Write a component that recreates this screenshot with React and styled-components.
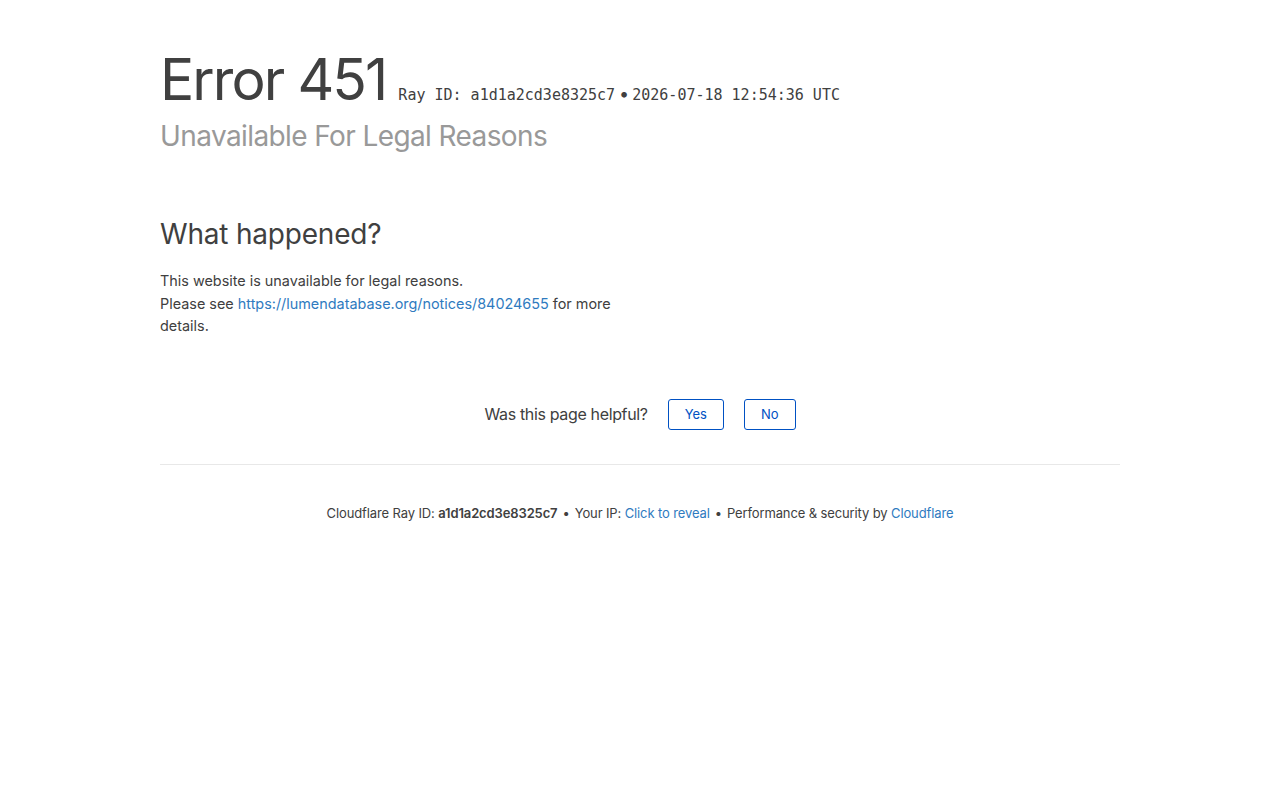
import React from "react";
import styled, { createGlobalStyle } from "styled-components";

const GlobalStyle = createGlobalStyle`
  html, body {
    margin: 0;
    padding: 0;
    background: #fff;
  }
  body {
    font-family: Inter, "Noto Sans", "Liberation Sans", sans-serif;
    color: #404040;
    -webkit-font-smoothing: antialiased;
  }
`;

const Page = styled.div`
  width: 960px;
  margin: 0 auto;
  padding-top: 47px;
`;

const Header = styled.header`
  display: flex;
  flex-direction: column;
`;

const TitleRow = styled.div`
  display: flex;
  align-items: baseline;
  gap: 12px;
`;

const ErrorType = styled.h1`
  margin: 0;
  font-size: 57px;
  font-weight: 400;
  line-height: 66px;
  color: #404040;
  letter-spacing: -1.9px;
`;

const RayInfo = styled.span`
  font-family: "DejaVu Sans Mono", "Liberation Mono", monospace;
  font-size: 15px;
  color: #404040;
  display: flex;
  align-items: baseline;
`;

const Dot = styled.span`
  font-family: Inter, sans-serif;
  font-size: 18px;
  margin: 0 3px 0 4px;
`;

const Subheadline = styled.h2`
  margin: 1px 0 0;
  font-size: 28px;
  font-weight: 400;
  line-height: 44px;
  color: #999;
  letter-spacing: -0.6px;
`;

const Section = styled.section`
  margin-top: 56px;
  max-width: 462px;
`;

const SectionTitle = styled.h2`
  margin: 0 0 16px;
  font-size: 28px;
  font-weight: 400;
  line-height: 40px;
  color: #404040;
  letter-spacing: -0.2px;
`;

const Text = styled.p`
  margin: 0;
  font-size: 14.4px;
  line-height: 22.5px;
  color: #404040;
`;

const Link = styled.a`
  color: #2f7bbf;
  text-decoration: none;
`;

const Feedback = styled.div`
  margin-top: 61px;
  display: flex;
  align-items: center;
  justify-content: center;
  gap: 20px;
  padding-bottom: 34px;
  border-bottom: 1px solid #e8e8e8;
`;

const FeedbackLabel = styled.span`
  font-size: 16px;
  color: #404040;
  letter-spacing: -0.35px;
`;

const Buttons = styled.div`
  display: flex;
  gap: 20px;
`;

const FeedbackButton = styled.button`
  font-family: inherit;
  font-size: 13px;
  color: #0051c3;
  background: #fff;
  border: 1px solid #0051c3;
  border-radius: 3px;
  height: 31px;
  padding: 0 16px;
  cursor: pointer;
`;

const Footer = styled.footer`
  padding-top: 40px;
  display: flex;
  justify-content: center;
  align-items: center;
  gap: 5px;
  font-size: 13px;
  color: #404040;
  letter-spacing: -0.12px;
`;

const Strong = styled.strong`
  font-weight: 600;
`;

const FooterLink = styled.a`
  color: #2f7bbf;
  text-decoration: none;
`;

export default function App() {
  return (
    <>
      <GlobalStyle />
      <Page>
        <Header>
          <TitleRow>
            <ErrorType>Error 451</ErrorType>
            <RayInfo>
              Ray ID: a1d1a2cd3e8325c7
              <Dot>•</Dot>
              2026-07-18 12:54:36 UTC
            </RayInfo>
          </TitleRow>
          <Subheadline>Unavailable For Legal Reasons</Subheadline>
        </Header>

        <Section>
          <SectionTitle>What happened?</SectionTitle>
          <Text>This website is unavailable for legal reasons.</Text>
          <Text>
            Please see{" "}
            <Link href="#">https://lumendatabase.org/notices/84024655</Link>{" "}
            for more details.
          </Text>
        </Section>

        <Feedback>
          <FeedbackLabel>Was this page helpful?</FeedbackLabel>
          <Buttons>
            <FeedbackButton>Yes</FeedbackButton>
            <FeedbackButton>No</FeedbackButton>
          </Buttons>
        </Feedback>

        <Footer>
          <span>
            Cloudflare Ray ID: <Strong>a1d1a2cd3e8325c7</Strong>
          </span>
          <span>•</span>
          <span>
            Your IP: <FooterLink href="#">Click to reveal</FooterLink>
          </span>
          <span>•</span>
          <span>
            Performance &amp; security by{" "}
            <FooterLink href="#">Cloudflare</FooterLink>
          </span>
        </Footer>
      </Page>
    </>
  );
}
